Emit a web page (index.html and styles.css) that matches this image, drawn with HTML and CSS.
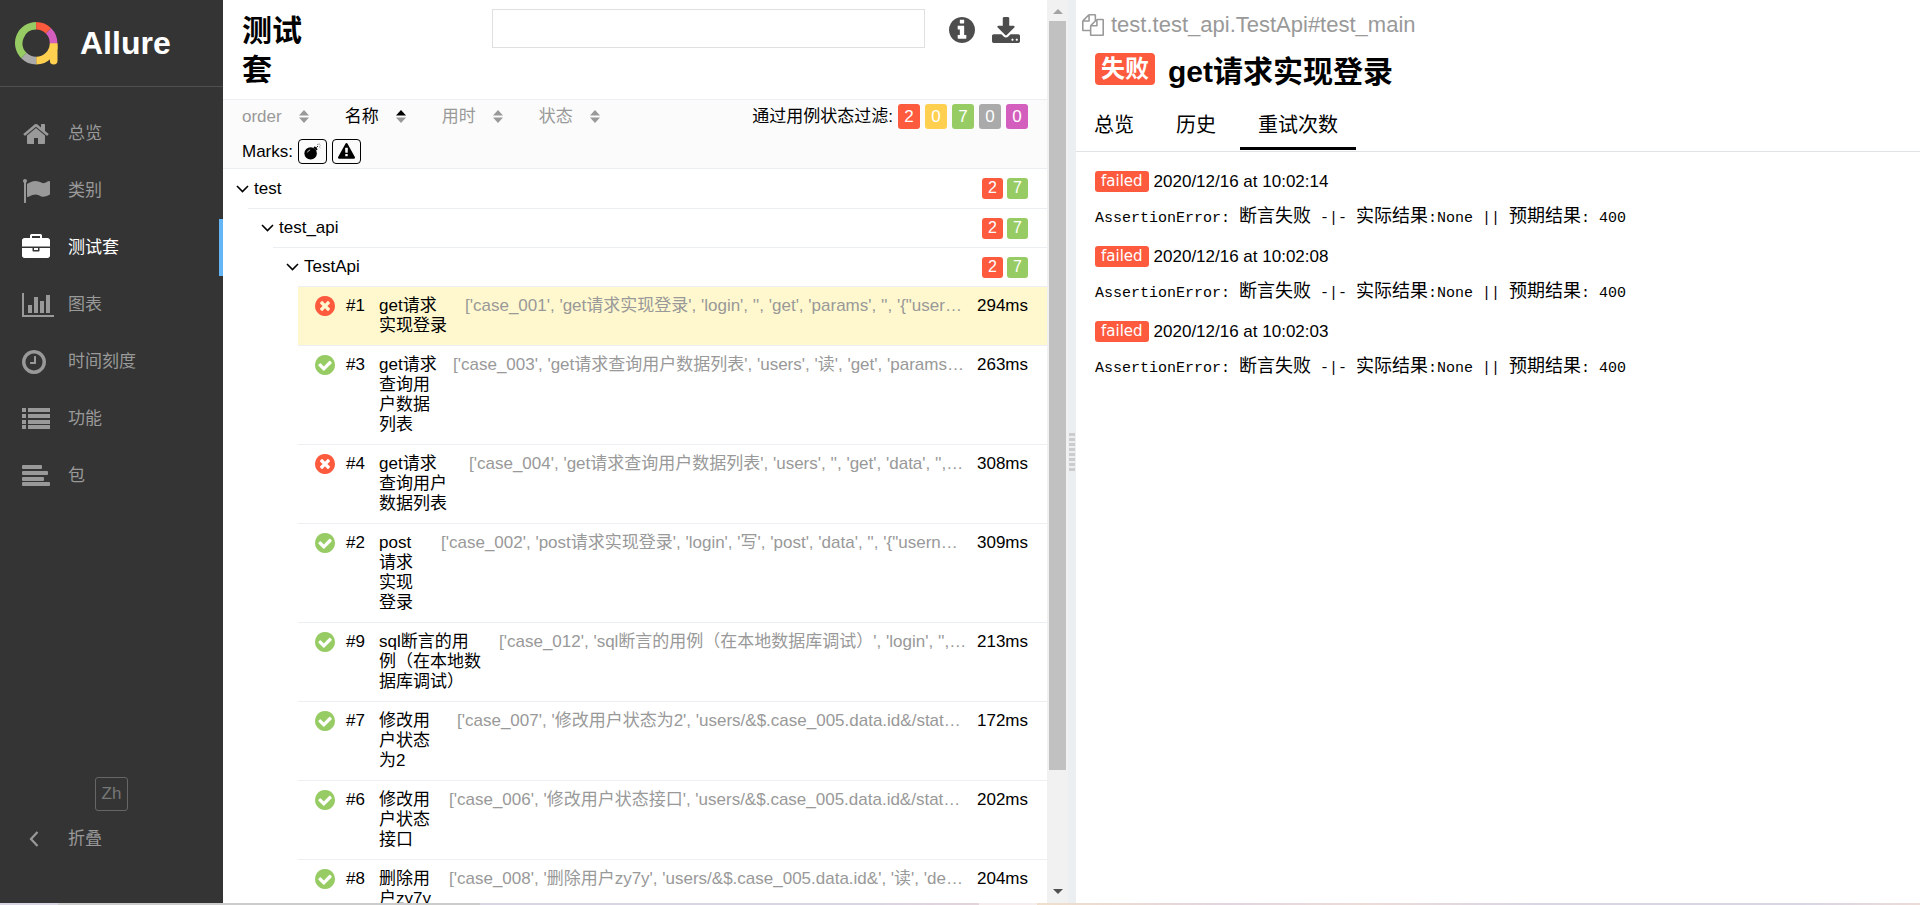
FILE: index.html
```html
<!DOCTYPE html>
<html lang="zh">
<head>
<meta charset="utf-8">
<title>Allure Report</title>
<link rel="stylesheet" href="styles.css">
</head>
<body>
<svg class="sprite" aria-hidden="true">
  <symbol id="check" viewBox="128 128 1536 1536"><path d="M1412 734q0-28-18-46l-91-90q-19-19-45-19t-45 19l-408 407-226-226q-19-19-45-19t-45 19l-91 90q-18 18-18 46 0 27 18 45l362 362q19 19 45 19 27 0 46-19l543-543q18-18 18-45zm252 162q0 209-103 385.5t-279.5 279.5-385.5 103-385.5-103-279.5-279.5-103-385.5 103-385.5 279.5-279.5 385.5-103 385.5 103 279.5 279.5 103 385.5z"/></symbol>
  <symbol id="cross" viewBox="128 128 1536 1536"><path d="M1277 1122q0-26-19-45l-181-181 181-181q19-19 19-45 0-27-19-46l-90-90q-19-19-46-19-26 0-45 19l-181 181-181-181q-19-19-45-19-27 0-46 19l-90 90q-19 19-19 46 0 26 19 45l181 181-181 181q-19 19-19 45 0 27 19 46l90 90q19 19 46 19 26 0 45-19l181-181 181 181q19 19 45 19 27 0 46-19l90-90q19-19 19-46zm387-226q0 209-103 385.5t-279.5 279.5-385.5 103-385.5-103-279.5-279.5-103-385.5 103-385.5 279.5-279.5 385.5-103 385.5 103 279.5 279.5 103 385.5z"/></symbol>
  <symbol id="down" viewBox="0 0 13 8"><path d="M1 1l5.500 5.500L12 1" fill="none" stroke="currentColor" stroke-width="1.600"/></symbol>
  <symbol id="sort" viewBox="0 0 10 13"><path class="up" d="M0 5.500L5 0l5 5.500z"/><path d="M0 7.500h10L5 13z"/></symbol>
</svg>
<div class="app">
  <aside class="side">
    <a class="brand" href="#">
      <svg class="logo" viewBox="0 0 43 43" stroke-width="7.600">
        <path stroke="#ffd050" d="M38.600 21.200A17.400 17.400 0 0 1 21.200 38.600"/>
        <path stroke="#ffd050" stroke-linecap="round" d="M38.700 25v13.700"/>
        <path stroke="#ffd050" d="M38.700 21.200v6"/>
        <path stroke="#aaa" d="M21.200 38.600A17.400 17.400 0 0 1 8.900 33.500"/>
        <path stroke="#97cc64" d="M8.900 33.500A17.400 17.400 0 0 1 21.200 3.800"/>
        <path stroke="#fd5a3e" d="M21.200 3.800A17.400 17.400 0 0 1 33.500 8.900"/>
        <path stroke="#d35ebe" d="M33.500 8.900A17.400 17.400 0 0 1 38.600 21.200"/>
      </svg>
      <span>Allure</span>
    </a>
    <nav class="menu">
      <a href="#"><svg class="ico" viewBox="0 0 1792 1792"><path d="M1472 992v480q0 26-19 45t-45 19h-384v-384h-256v384h-384q-26 0-45-19t-19-45v-480q0-1 .5-3t.5-3l575-474 575 474q1 2 1 6zm223-69l-62 74q-8 9-21 11h-3q-13 0-21-7l-692-577-692 577q-12 8-24 7-13-2-21-11l-62-74q-8-10-7-23.500t11-21.500l719-599q32-26 76-26t76 26l244 204v-195q0-14 9-23t23-9h192q14 0 23 9t9 23v408l219 182q10 8 11 21.500t-7 23.500z"/></svg><span>总览</span></a>
      <a href="#"><svg class="ico" viewBox="0 0 1792 1792"><path d="M320 256q0 72-64 110v1266q0 13-9.500 22.500t-22.500 9.500h-64q-13 0-22.500-9.500t-9.500-22.500v-1266q-64-38-64-110 0-53 37.500-90.500t90.500-37.500 90.500 37.500 37.500 90.500zm1472 64v763q0 25-12.500 38.500t-39.500 27.500q-215 116-369 116-61 0-123.500-22t-108.500-48-115.500-48-142.500-22q-192 0-464 146-17 9-33 9-26 0-45-19t-19-45v-742q0-32 31-55 21-14 79-43 236-120 421-120 107 0 200 29t219 88q38 19 88 19 54 0 117.500-21t110-47 88-47 54.500-21q26 0 45 19t19 45z"/></svg><span>类别</span></a>
      <a href="#" class="on" aria-current="page"><svg class="ico" viewBox="0 0 1792 1792"><path d="M640 256h512v-128h-512v128zm1152 640v480q0 66-47 113t-113 47h-1472q-66 0-113-47t-47-113v-480h672v160q0 26 19 45t45 19h320q26 0 45-19t19-45v-160h672zm-768 0v128h-256v-128h256zm768-480v384h-1792v-384q0-66 47-113t113-47h352v-160q0-40 28-68t68-28h576q40 0 68 28t28 68v160h352q66 0 113 47t47 113z"/></svg><span>测试套</span></a>
      <a href="#"><svg class="ico wide" viewBox="0 0 2048 1792"><path d="M640 896v512h-256v-512h256zm384-512v1024h-256v-1024h256zm1024 1152v128h-2048v-1536h128v1408h1920zm-640-896v768h-256v-768h256zm384-384v1152h-256v-1152h256z"/></svg><span>图表</span></a>
      <a href="#"><svg class="ico" viewBox="128 0 1792 1792"><path d="M1024 544v448q0 14-9 23t-23 9h-320q-14 0-23-9t-9-23v-64q0-14 9-23t23-9h224v-352q0-14 9-23t23-9h64q14 0 23 9t9 23zm416 352q0-148-73-273t-198-198-273-73-273 73-198 198-73 273 73 273 198 198 273 73 273-73 198-198 73-273zm224 0q0 209-103 385.500t-279.500 279.500-385.500 103-385.500-103-279.500-279.500-103-385.500 103-385.500 279.500-279.500 385.500-103 385.500 103 279.500 279.500 103 385.500z"/></svg><span>时间刻度</span></a>
      <a href="#"><svg class="ico" viewBox="0 0 28 28"><path d="M0 3h4v4H0zM6 3h22v4H6zM0 9h4v4H0zM6 9h22v4H6zM0 15h4v4H0zM6 15h22v4H6zM0 20h4v4H0zM6 20h22v4H6z"/></svg><span>功能</span></a>
      <a href="#"><svg class="ico" viewBox="0 0 28 28"><path d="M1 3h18q1 0 1 1v2q0 1-1 1H1q-1 0-1-1V4q0-1 1-1zM1 9h24q1 0 1 1v2q0 1-1 1H1q-1 0-1-1v-2q0-1 1-1zM1 15h20q1 0 1 1v2q0 1-1 1H1q-1 0-1-1v-2q0-1 1-1zM1 20h26q1 0 1 1v2q0 1-1 1H1q-1 0-1-1v-2q0-1 1-1z"/></svg><span>包</span></a>
    </nav>
    <div class="side-foot">
      <button class="lang" type="button">Zh</button>
      <button class="fold" type="button"><svg viewBox="0 0 28 16"><path d="M15.500 1L9 8l6.500 7" fill="none" stroke="currentColor" stroke-width="2.200"/></svg><span>折叠</span></button>
    </div>
  </aside>

  <section class="pane">
    <header class="pane-head">
      <h1>测试套</h1>
      <input class="search" type="text" aria-label="搜索">
      <button class="plain" type="button" aria-label="信息"><svg class="info" viewBox="128 128 1536 1536"><path d="M1152 1376v-160q0-14-9-23t-23-9h-96v-512q0-14-9-23t-23-9h-320q-14 0-23 9t-9 23v160q0 14 9 23t23 9h96v320h-96q-14 0-23 9t-9 23v160q0 14 9 23t23 9h448q14 0 23-9t9-23zm-128-896v-160q0-14-9-23t-23-9h-192q-14 0-23 9t-9 23v160q0 14 9 23t23 9h192q14 0 23-9t9-23zm640 416q0 209-103 385.500t-279.500 279.500-385.500 103-385.500-103-279.500-279.500-103-385.500 103-385.500 279.500-279.500 385.500-103 385.500 103 279.500 279.500 103 385.500z"/></svg></button>
      <button class="plain" type="button" aria-label="下载"><svg class="save" viewBox="64 0 1664 1536"><path d="M1344 1344q0-26-19-45t-45-19-45 19-19 45 19 45 45 19 45-19 19-45zm256 0q0-26-19-45t-45-19-45 19-19 45 19 45 45 19 45-19 19-45zm128-224v320q0 40-28 68t-68 28h-1472q-40 0-68-28t-28-68v-320q0-40 28-68t68-28h465l135 136q58 56 136 56t136-56l136-136h464q40 0 68 28t28 68zm-325-569q17 41-14 70l-448 448q-18 19-45 19t-45-19l-448-448q-31-29-14-70 17-39 59-39h256v-448q0-26 19-45t45-19h256q26 0 45 19t19 45v448h256q42 0 59 39z"/></svg></button>
    </header>
    <div class="tools">
      <div class="tool-row">
        <div class="sorts">
          <button type="button">order<svg><use href="#sort"/></svg></button>
          <button type="button" class="sorted">名称<svg viewBox="0 0 10 13"><path d="M0 5.500L5 0l5 5.500z"/><path fill="#999" d="M0 7.500h10L5 13z"/></svg></button>
          <button type="button">用时<svg><use href="#sort"/></svg></button>
          <button type="button">状态<svg><use href="#sort"/></svg></button>
        </div>
        <div class="filters">
          <span>通过用例状态过滤:</span>
          <button type="button" class="chip failed">2</button>
          <button type="button" class="chip broken">0</button>
          <button type="button" class="chip passed">7</button>
          <button type="button" class="chip skipped">0</button>
          <button type="button" class="chip unknown">0</button>
        </div>
      </div>
      <div class="marks">
        <span>Marks:</span>
        <button type="button" aria-label="不稳定"><svg viewBox="0 0 18 18"><circle cx="7" cy="11" r="6.600"/><path d="M10 5l1.500-1.500 3 3L13 8z"/><path d="M3.600 10A4 4 0 0 1 6.500 7.400" fill="none" stroke="#fff" stroke-width=".8"/><path d="M13 5l1.800-1.800" fill="none" stroke="#000" stroke-width="1"/><path d="M13.800 1.200l1.200.8M16 .5v1.500M17.500 2.500l-1 .8M17.300 5l-1-.6" fill="none" stroke="#777" stroke-width=".9"/></svg></button>
        <button type="button" aria-label="新失败"><svg viewBox="0 0 1792 1792"><path d="M1024 1375v-190q0-14-9.500-23.500t-22.500-9.500h-192q-13 0-22.500 9.500t-9.500 23.500v190q0 14 9.500 23.500t22.500 9.500h192q13 0 22.500-9.500t9.500-23.500zm-2-374l18-459q0-12-10-19-13-11-24-11h-220q-11 0-24 11-10 7-10 21l17 457q0 10 10 16.500t24 6.500h185q14 0 23.500-6.500t10.500-16.500zm-14-934l768 1408q35 63-2 126-17 29-46.500 46t-63.500 17h-1536q-34 0-63.500-17t-46.500-46q-37-63-2-126l768-1408q17-31 47-49t65-18 65 18 47 49z"/></svg></button>
      </div>
    </div>
    <div class="tree">
      <div class="group"><svg><use href="#down"/></svg><span>test</span><b class="failed">2</b><b class="passed">7</b></div>
      <div class="kids">
        <div class="group"><svg><use href="#down"/></svg><span>test_api</span><b class="failed">2</b><b class="passed">7</b></div>
        <div class="kids">
          <div class="group"><svg><use href="#down"/></svg><span>TestApi</span><b class="failed">2</b><b class="passed">7</b></div>
          <div class="kids">
            <a class="leaf picked" href="#"><svg class="bad"><use href="#cross"/></svg><span class="num">#1</span><span class="name n5">get请求<br>实现登录</span><span class="args">['case_001', 'get请求实现登录', 'login', '', 'get', 'params', '', '{"user…</span><span class="time">294ms</span></a>
            <a class="leaf" href="#"><svg class="ok"><use href="#check"/></svg><span class="num">#3</span><span class="name n3">get请求<br>查询用<br>户数据<br>列表</span><span class="args">['case_003', 'get请求查询用户数据列表', 'users', '读', 'get', 'params…</span><span class="time">263ms</span></a>
            <a class="leaf" href="#"><svg class="bad"><use href="#cross"/></svg><span class="num">#4</span><span class="name n6">get请求<br>查询用户<br>数据列表</span><span class="args">['case_004', 'get请求查询用户数据列表', 'users', '', 'get', 'data', '',…</span><span class="time">308ms</span></a>
            <a class="leaf" href="#"><svg class="ok"><use href="#check"/></svg><span class="num">#2</span><span class="name n1">post<br>请求<br>实现<br>登录</span><span class="args">['case_002', 'post请求实现登录', 'login', '写', 'post', 'data', '', '{"usern…</span><span class="time">309ms</span></a>
            <a class="leaf" href="#"><svg class="ok"><use href="#check"/></svg><span class="num">#9</span><span class="name n7">sql断言的用<br>例（在本地数<br>据库调试）</span><span class="args">['case_012', 'sql断言的用例（在本地数据库调试）', 'login', '',…</span><span class="time">213ms</span></a>
            <a class="leaf" href="#"><svg class="ok"><use href="#check"/></svg><span class="num">#7</span><span class="name n4">修改用<br>户状态<br>为2</span><span class="args">['case_007', '修改用户状态为2', 'users/&amp;$.case_005.data.id&amp;/stat…</span><span class="time">172ms</span></a>
            <a class="leaf" href="#"><svg class="ok"><use href="#check"/></svg><span class="num">#6</span><span class="name n2">修改用<br>户状态<br>接口</span><span class="args">['case_006', '修改用户状态接口', 'users/&amp;$.case_005.data.id&amp;/stat…</span><span class="time">202ms</span></a>
            <a class="leaf" href="#"><svg class="ok"><use href="#check"/></svg><span class="num">#8</span><span class="name n2">删除用<br>户zy7y</span><span class="args">['case_008', '删除用户zy7y', 'users/&amp;$.case_005.data.id&amp;', '读', 'de…</span><span class="time">204ms</span></a>
          </div>
        </div>
      </div>
    </div>
  </section>
  <div class="bar" aria-hidden="true">
    <svg viewBox="0 0 10 5"><path fill="#a3a3a3" d="M0 5L5 0l5 5z"/></svg>
    <div class="track"><div class="thumb"></div></div>
    <svg viewBox="0 0 10 5"><path fill="#505050" d="M0 0h10L5 5z"/></svg>
  </div>
  <div class="gutter" aria-hidden="true"><i></i></div>

  <main class="detail">
    <div class="full"><svg viewBox="0 0 1792 1792"><path d="M1696 384q40 0 68 28t28 68v1216q0 40-28 68t-68 28h-960q-40 0-68-28t-28-68v-288h-544q-40 0-68-28t-28-68v-672q0-40 20-88t48-76l408-408q28-28 76-48t88-20h416q40 0 68 28t28 68v328q68-40 128-40h416zm-544 213l-299 299h299v-299zm-640-384l-299 299h299v-299zm196 647l316-316v-416h-384v416q0 40-28 68t-68 28h-416v640h512v-256q0-40 20-88t48-76zm956 804v-1152h-384v416q0 40-28 68t-68 28h-416v640h896z"/></svg><span>test.test_api.TestApi#test_main</span></div>
    <h2><span class="state">失败</span><span>get请求实现登录</span></h2>
    <nav class="tabs"><a href="#">总览</a><a href="#">历史</a><a href="#" class="on" aria-current="page">重试次数</a></nav>
    <div class="tries">
      <div class="try"><span class="label">failed</span><span>2020/12/16 at 10:02:14</span></div>
      <pre>AssertionError: <span>断言失败</span> -|- <span>实际结果</span>:None || <span>预期结果</span>: 400</pre>
      <div class="try"><span class="label">failed</span><span>2020/12/16 at 10:02:08</span></div>
      <pre>AssertionError: <span>断言失败</span> -|- <span>实际结果</span>:None || <span>预期结果</span>: 400</pre>
      <div class="try"><span class="label">failed</span><span>2020/12/16 at 10:02:03</span></div>
      <pre>AssertionError: <span>断言失败</span> -|- <span>实际结果</span>:None || <span>预期结果</span>: 400</pre>
    </div>
  </main>
</div>
<div class="edge"></div>
</body>
</html>
```
FILE: styles.css
```css
* { box-sizing: border-box; }
body {
  margin: 0;
  height: 100vh;
  display: flex;
  flex-direction: column;
  overflow: hidden;
  background: #fff;
  color: #000;
  font: 17px/20px "Liberation Sans", "Noto Sans CJK SC", sans-serif;
}
a { color: inherit; text-decoration: none; }
button { font: inherit; color: inherit; background: none; border: 0; padding: 0; cursor: pointer; }
svg { flex: none; fill: currentColor; display: block; }
h1, h2 { margin: 0; font-size: 30px; line-height: 39px; }
.sprite { position: absolute; width: 0; height: 0; }
.app { flex: 1; min-height: 0; display: flex; }

.side { flex: none; width: 223px; background: #343434; color: #999; display: flex; flex-direction: column; }
.brand {
  display: flex;
  align-items: center;
  gap: 22px;
  height: 87px;
  padding-left: 15px;
  border-bottom: 1px solid #4f4f4f;
  color: #fff;
  font-size: 32px;
  font-weight: bold;
}
.logo { width: 43px; height: 43px; fill: none; }
.menu { padding-top: 18px; }
.menu a { display: flex; align-items: center; height: 57px; padding-left: 22px; border-right: 4px solid transparent; }
.menu .ico { width: 28px; height: 28px; margin-right: 18px; }
.menu .wide { width: 32px; margin-right: 14px; }
.menu .on { color: #fff; border-color: #64b5f6; }
.side-foot { margin-top: auto; padding-bottom: 54px; display: flex; flex-direction: column; }
.lang { align-self: center; width: 33px; height: 34px; border: 1px solid #666; border-radius: 3px; color: #777; margin-bottom: 18px; }
.fold { display: flex; align-items: center; gap: 18px; padding-left: 22px; height: 20px; }
.fold svg { width: 28px; height: 16px; }

.pane { flex: 824 1 0; min-width: 0; overflow: hidden; }
.pane-head { display: flex; align-items: flex-start; padding: 9px 27px 10px 19px; border-bottom: 1px solid #eceff1; }
.pane-head h1 { width: 64px; padding-top: 2px; }
.search { width: 433px; height: 39px; margin: 0 24px 0 auto; border: 1px solid #e0e0e0; background: #fff; font: inherit; padding: 0 10px; }
.plain { color: #4d4d4d; padding-top: 8px; }
.info { width: 26px; height: 26px; margin-right: 17px; }
.save { width: 28px; height: 26px; }

.tools { background: #fbfbfb; border-bottom: 1px solid #eceff1; padding: 4px 19px 4px; }
.tool-row { display: flex; justify-content: space-between; align-items: center; height: 25px; }
.sorts { display: flex; gap: 36px; color: #999; }
.sorts button { display: flex; align-items: center; gap: 17px; }
.sorts svg { width: 10px; height: 13px; }
.sorts .sorted { color: #000; }
.filters { display: flex; align-items: center; gap: 5px; }
.chip { width: 22px; height: 25px; border-radius: 3px; color: #fff; }
.failed { background: #fd5a3e; }
.broken { background: #ffd050; }
.passed { background: #97cc64; }
.skipped { background: #aaa; }
.unknown { background: #d35ebe; }
.marks { display: flex; align-items: center; gap: 5px; margin-top: 10px; }
.marks button { width: 29px; height: 25px; border: 1px solid #000; border-radius: 4px; display: flex; align-items: center; justify-content: center; }
.marks svg { width: 17px; height: 17px; }

.group { display: flex; align-items: center; height: 39px; padding: 0 19px 0 13px; }
.group svg { width: 13px; height: 8px; margin-right: 5px; }
.group span { margin-right: auto; }
.group b { width: 21px; height: 21px; margin-left: 4px; border-radius: 3px; color: #fff; font-size: 16px; font-weight: normal; text-align: center; }
.kids { margin-left: 25px; }
.kids .group, .leaf { border-top: 1px solid #eceff1; }
.leaf { display: flex; align-items: flex-start; padding: 9px 19px 9px 17px; }
.leaf svg { width: 20px; height: 20px; margin-right: 11px; }
.picked { background: #fff8ce; }
.bad { color: #fd5a3e; }
.ok { color: #97cc64; }
.num { flex: none; width: 33px; }
.name { flex: none; white-space: nowrap; }
.n1 { width: 62px; }
.n2 { width: 70px; }
.n3 { width: 74px; }
.n4 { width: 78px; }
.n5 { width: 86px; }
.n6 { width: 90px; }
.n7 { width: 120px; }
.args { flex: 1; min-width: 0; overflow: hidden; white-space: nowrap; color: #999; }
.time { flex: none; }

.bar { flex: none; width: 21px; background: #f1f1f1; display: flex; flex-direction: column; align-items: center; padding: 9px 0; }
.bar svg { width: 10px; height: 5px; }
.track { flex: 1; width: 17px; margin: 7px 0; }
.thumb { height: 87%; background: #c1c1c1; }
.gutter { flex: none; width: 8px; background: #eceff1; display: flex; align-items: center; justify-content: center; }
.gutter i { width: 6px; height: 38px; background: repeating-linear-gradient(#ccc 0 3px, transparent 3px 5px); border-right: 0; }

.detail { flex: 844 1 0; min-width: 0; }
.full { display: flex; align-items: center; gap: 7px; padding: 12px 6px 0; color: #999; font-size: 22px; line-height: 26px; }
.full svg { width: 22px; height: 22px; }
.detail h2 { display: flex; align-items: center; gap: 13px; padding: 14px 19px 0; }
.state { background: #fd5a3e; color: #fff; border-radius: 4px; font-size: 24px; line-height: 32px; padding: 0 6px; margin-bottom: 6px; }
.tabs { display: flex; gap: 6px; margin-top: 11px; border-bottom: 1px solid #e0e3e5; font-size: 20px; line-height: 24px; }
.tabs a { padding: 11px 18px 10px; border-bottom: 3px solid transparent; margin-bottom: 1px; }
.tabs .on { border-color: #000; }
.tries { padding: 19px 19px 0; }
.try { display: flex; align-items: center; gap: 5px; }
.label { background: #fd5a3e; color: #fff; border-radius: 3px; font: 15px/21px "DejaVu Sans", sans-serif; padding: 0 6px; }
pre { margin: 15px 0; font: 15px/24px "Liberation Mono", "Noto Sans CJK SC", monospace; }
pre span { font-size: 18px; line-height: 18px; }

.edge {
  flex: none;
  height: 2px;
  background: linear-gradient(90deg, #d9d5e3 3%, #ccc 3% 25%, #d9d5e3 25% 45%, #e3d3da 51%, #f6eeee 51% 54%, #f0dfcb 54%, #e2d5df 64%, #ecdcd8 71%, #d9d5e3 80% 94%, #ecdcd8);
}
```
